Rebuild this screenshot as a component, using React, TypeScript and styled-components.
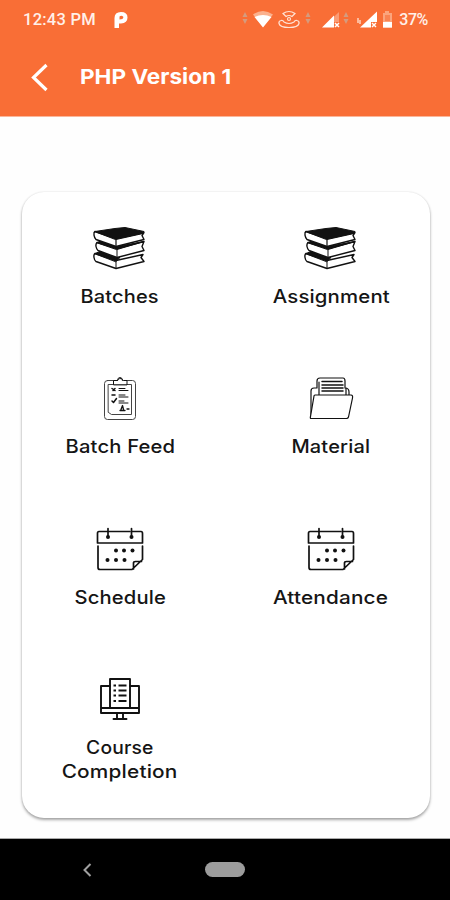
import React from "react";
import styled, { createGlobalStyle } from "styled-components";

const GlobalStyle = createGlobalStyle`
  * { box-sizing: border-box; }
  body { margin: 0; background: #fefefe; }
`;

const Screen = styled.div`
  width: 450px;
  height: 900px;
  display: flex;
  flex-direction: column;
  background: #fefefe;
  overflow: hidden;
  font-family: Inter, "Open Sans", sans-serif;
`;

const Header = styled.header`
  height: 117px;
  background: #f96e36;
  color: #fff;
  border-bottom: 1px solid #fbb69a;
`;

const StatusBar = styled.div`
  height: 40px;
  padding: 0 22px 0 23px;
  display: flex;
  align-items: center;
  justify-content: space-between;
  font: 500 16.5px/40px Roboto, sans-serif;
  color: #fff0e9;
`;

const StatusGroup = styled.div`
  display: flex;
  align-items: center;
`;

const Clock = styled.span`
  width: 89px;
  letter-spacing: 0.25px;
`;

const Percent = styled.span`
  font-size: 16px;
  letter-spacing: -0.4px;
`;

const TitleBar = styled.div`
  height: 76px;
  padding-left: 27px;
  display: flex;
  align-items: center;
`;

const Title = styled.h1`
  margin: 0 0 2px 28px;
  font-size: 20.5px;
  line-height: 28px;
  font-weight: 700;
  white-space: nowrap;
  transform: scaleX(1.1);
  transform-origin: left;
`;

const Main = styled.main`
  flex: 1;
  padding: 75px 20px 0 22px;
`;

const Card = styled.section`
  height: 626px;
  padding: 29px 9px 0 8px;
  border-radius: 22px;
  background: #fff;
  box-shadow: 0 2px 3px rgba(0, 0, 0, 0.34), 0 0 2px rgba(0, 0, 0, 0.12);
  display: grid;
  grid-template-columns: 180px 180px;
  grid-auto-rows: 150.5px;
  column-gap: 31px;
`;

const Tile = styled.div`
  display: flex;
  flex-direction: column;
  align-items: center;
`;

const TileIcon = styled.svg`
  display: block;
  width: 60px;
  height: 54px;
  margin-bottom: 8.5px;
  fill: none;
  stroke: #111;
  stroke-linecap: round;
  stroke-linejoin: round;
`;

const LabelLine = styled.span<{ $stretch: number }>`
  font-size: 18.2px;
  line-height: 24px;
  font-weight: 500;
  letter-spacing: 0.15px;
  color: #151515;
  white-space: nowrap;
  transform: scaleX(${(p) => p.$stretch});
`;

const NavBar = styled.nav`
  height: 62px;
  flex: none;
  background: #000;
  border-top: 1px solid #aaa;
  display: grid;
  grid-template-columns: 174px 102px 174px;
  align-items: center;
  justify-items: center;
`;

const HomePill = styled.div`
  width: 40px;
  height: 15px;
  border-radius: 8px;
  background: #9c9c9c;
`;

const Books = () => (
  <TileIcon viewBox="0 4.500 60 54">
    <path d="M5 37c-2 1-1 7 1 8l20 7 28-7-3-4 2-3-27 6z" fill="#fff" strokeWidth="1.4" />
    <path d="M5 37l5-2 16 6 4 0-4 4z" fill="#111" strokeWidth="1" />
    <path d="M26 45v7" strokeWidth="1" />
    <path d="M7 26c-2 2-1 6 1 8l19 7 27-7-2-4 2-5-27 7z" fill="#fff" strokeWidth="1.4" />
    <path d="M7 26l5-2 15 6 27-5-27 8z" fill="#111" strokeWidth="1" />
    <path d="M27 33v7" strokeWidth="1" />
    <path d="M5 15c-2 1-1 6 1 8l20 7 28-7-2-4 2-3-28 6z" fill="#fff" strokeWidth="1.4" />
    <path d="M5 15l20-3 10-1 19 4-1 2-27 6z" fill="#111" strokeWidth="1" />
    <path d="M26 21v8" strokeWidth="1.2" />
  </TileIcon>
);

const Clipboard = () => (
  <TileIcon viewBox="0 5 60 54" strokeWidth="1">
    <rect x="14.500" y="13.500" width="31" height="39" rx="3" stroke="#444" />
    <path d="M18.500 17.500h23v30h-20l-3-2z" stroke="#444" />
    <path d="M23.500 17.500v-4h4a3 3 0 0 1 5-1l1 1h3.500v4z" fill="#fff" />
    <path d="M27.500 13.500q0-3 2.500-3t2.500 3" />
    <path d="M22 21.500l3 2M25 21.500l-2 2M22 28h3M22 34l1.500 1.500 3-4" strokeWidth="1.500" />
    <path d="M29 21.500h6M29 23.500h9M29 28h6M29 30h9M29 34h5M29 36h9" />
    <path d="M30 43.500h5M31 42.500l1.500-4 1 4M37 42h2" strokeWidth="1.300" />
  </TileIcon>
);

const Folder = () => (
  <TileIcon viewBox="0 6 60 54" strokeWidth="1.200" stroke="#333">
    <path d="M10 51V25q0-3 3-3h3v-7q0-3 3-3h23q2 0 2 3v7q4 0 4 4v4" />
    <path d="M18 29V16M45 22v7" />
    <path d="M21 15.500h20M21 19h21M21 22h21M21 25h21" strokeWidth="1.500" />
    <path d="M14 29h36q2 0 1.500 3l-4 19q-.5 1.500-2 1.500H10q-1 0-.5-2L13 30q0-1 1-1z" fill="#fff" />
  </TileIcon>
);

const Calendar = () => (
  <TileIcon viewBox="0 4 60 54" strokeWidth="1.700">
    <path d="M18 13.500H9q-1.500 0-1.500 2V25h45v-9.500q0-2-1.500-2h-9M19 13.500h21" />
    <path d="M18 10.500v8M41.500 10.500v8" />
    <path d="M8 28v21.500q0 2 2 2h32l10.500-10V28M43.500 51v-6q0-1.500 2-1.500h6" />
    <g fill="#111" stroke="none">
      <circle cx="18" cy="19" r="2" /><circle cx="41.500" cy="19" r="2" />
      <circle cx="26" cy="32.500" r="2" /><circle cx="34" cy="32.500" r="2" /><circle cx="42.500" cy="32.500" r="2" />
      <circle cx="17.500" cy="42" r="2" /><circle cx="26" cy="42" r="2" /><circle cx="34.500" cy="42" r="2" />
    </g>
  </TileIcon>
);

const Monitor = () => (
  <TileIcon viewBox="0 3 60 54" strokeWidth="1.900">
    <path d="M20 16h-9v27h38V16h-9M11 38h38" />
    <path d="M20 38V9h20v29" />
    <path d="M27 43v5M33 43v5M23.500 49h13" />
    <path d="M23.500 15.500h2.500M28.500 15.500h8M23.500 20.500h2.500M28.500 20.500h8M23.500 25.500h2.500M28.500 25.500h8M23.500 31h2.500M28.500 31h8" strokeWidth="2.100" strokeLinecap="butt" />
  </TileIcon>
);

const items = [
  { Icon: Books, lines: [{ text: "Batches", stretch: 1.1 }] },
  { Icon: Books, lines: [{ text: "Assignment", stretch: 1.12 }] },
  { Icon: Clipboard, lines: [{ text: "Batch Feed", stretch: 1.11 }] },
  { Icon: Folder, lines: [{ text: "Material", stretch: 1.1 }] },
  { Icon: Calendar, lines: [{ text: "Schedule", stretch: 1.11 }] },
  { Icon: Calendar, lines: [{ text: "Attendance", stretch: 1.14 }] },
  {
    Icon: Monitor,
    lines: [
      { text: "Course", stretch: 1.06 },
      { text: "Completion", stretch: 1.145 },
    ],
  },
];

const StatusIcons = () => (
  <svg width="159" height="24" viewBox="240 8 159 24" fill="none">
    <g fill="#d59b7e">
      <path d="M245 12l2.500 5h-5zM242.500 19h5l-2.500 5zM308 12l2.500 5h-5zM305.500 19h5l-2.500 5zM346 12l2.500 5h-5zM343.500 19h5l-2.500 5z" />
    </g>
    <path d="M253 14.500q10-7 20 0l-10 12.500z" fill="#fbb18e" />
    <path d="M254.500 17q8.500-4 17 0L263 27.500z" fill="#fff" />
    <g stroke="#ffe3d5" strokeWidth="1.200">
      <path d="M283 13.500q6-4 12 0l-3 3q-3-2-6 0z" />
      <circle cx="289" cy="19" r="1.500" />
      <path d="M281 20.500q-2.500.5-2 3 1 4 10 4t10-4q.5-2.500-2-3-2-.5-3 1.500-5 3-10 0-1-2-3-1.500z" />
    </g>
    <path d="M323 27l16-15v15z" fill="#fa9c75" />
    <path d="M322 27.500l12-12v12z" fill="#fff" />
    <path d="M334 22h6v6h-6z" fill="#f96e36" />
    <path d="M335 23l4 4M339 23l-4 4" stroke="#fff" strokeWidth="1.500" />
    <path d="M360 27.500l17-16v16z" fill="#fff" />
    <path d="M371 22h6v6h-6z" fill="#f96e36" />
    <path d="M372 23l4 4M376 23l-4 4" stroke="#fff" strokeWidth="1.400" />
    <path d="M358 18v5M360 20v4" stroke="#ffe3d5" strokeWidth="1.300" />
    <path d="M383 13h2v-2h4v2h3v15h-9z" fill="#fba47d" />
    <path d="M385 15h5v6h-5z" fill="#f98353" />
    <path d="M383 22h9v5.500h-9z" fill="#fff" />
  </svg>
);

export default function App() {
  return (
    <>
      <GlobalStyle />
      <Screen>
        <Header>
          <StatusBar>
            <StatusGroup>
              <Clock>12:43 PM</Clock>
              <svg width="18" height="20" viewBox="0 0 18 20">
                <path fillRule="evenodd" fill="#fff" d="M2.500 18V8Q2.500 2 9 2q6.500 0 6.500 5.500T9 13.500H7V18zM7.500 6.500v3l3-.5 1-2q-2-2-4-.5z" />
              </svg>
            </StatusGroup>
            <StatusGroup>
              <StatusIcons />
              <Percent>37%</Percent>
            </StatusGroup>
          </StatusBar>
          <TitleBar>
            <svg width="25" height="32" viewBox="0 0 25 32">
              <path d="M19.500 3L6.500 15.500l13 12.500" fill="none" stroke="#fff" strokeWidth="3.200" />
            </svg>
            <Title>PHP Version 1</Title>
          </TitleBar>
        </Header>
        <Main>
          <Card>
            {items.map(({ Icon, lines }) => (
              <Tile key={lines[0].text}>
                <Icon />
                {lines.map(({ text, stretch }) => (
                  <LabelLine key={text} $stretch={stretch}>{text}</LabelLine>
                ))}
              </Tile>
            ))}
          </Card>
        </Main>
        <NavBar>
          <svg width="14" height="18" viewBox="0 0 14 18">
            <path d="M10.500 3L4.500 9l6 6" fill="none" stroke="#a0a0a0" strokeWidth="2" />
          </svg>
          <HomePill />
        </NavBar>
      </Screen>
    </>
  );
}
